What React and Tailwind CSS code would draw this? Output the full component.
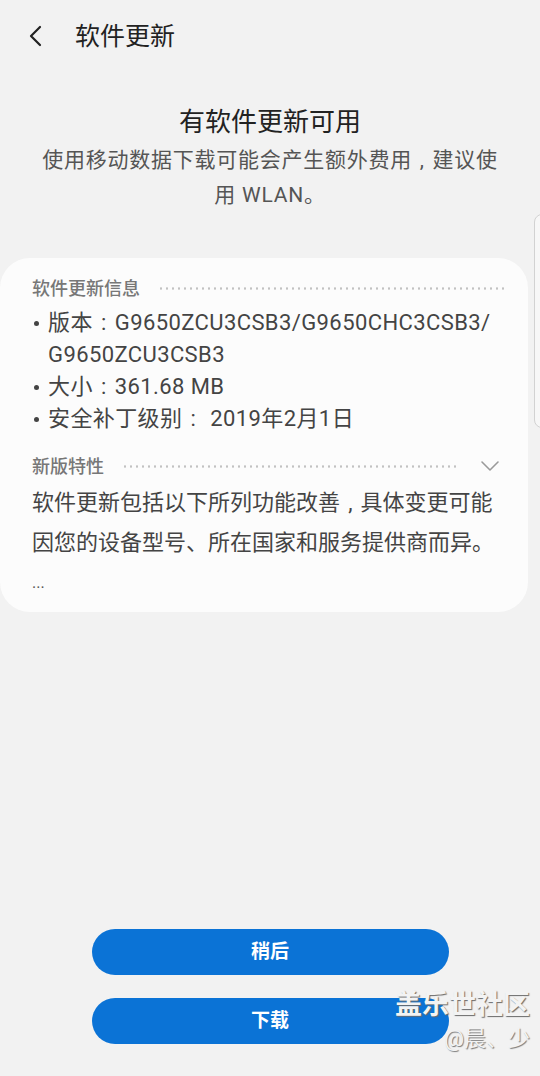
const FONT = "font-['Roboto','Noto_Sans_CJK_SC',sans-serif]";

// full-width punctuation drawn centred in its em box, as on the device
function Pu({ children }) {
  return <span className="px-[0.37em]">{children}</span>;
}

function Dots({ className = "" }) {
  return (
    <div
      className={`h-[3px] flex-1 bg-[radial-gradient(circle,#c2c2c2_1px,transparent_1.3px)] bg-[length:6px_3px] bg-repeat-x ${className}`}
    />
  );
}

const BULLETS = [
  [<>版本<Pu>:</Pu>G9650ZCU3CSB3/G9650CHC3CSB3/</>, "G9650ZCU3CSB3"],
  [<>大小<Pu>:</Pu>361.68 MB</>],
  [<>安全补丁级别<Pu>:</Pu> 2019年2月1日</>],
];

export default function App() {
  return (
    <div className={`relative h-[1076px] w-[540px] overflow-hidden bg-[#f2f2f2] flex flex-col ${FONT}`}>
      {/* Top bar */}
      <div className="h-[72px] flex items-center pl-[28px]">
        <svg width="16" height="22" viewBox="0 0 16 22" fill="none">
          <path d="M12 2 L3 11 L12 20" stroke="#222" strokeWidth="2.2" strokeLinecap="round" strokeLinejoin="round" />
        </svg>
        <span className="ml-[31px] text-[25px] leading-none text-[#222]">软件更新</span>
      </div>

      {/* Heading */}
      <h1 className="mt-[32px] text-center text-[26px] leading-[36px] text-[#222]">有软件更新可用</h1>
      <div className="mt-[3px] px-[32px] text-center text-[21px] leading-[35px] text-[#555] tracking-[0.75px]">
        <p>使用移动数据下载可能会产生额外费用<Pu>,</Pu>建议使</p>
        <p>用 WLAN。</p>
      </div>

      {/* Info card */}
      <div className="mt-[45px] mr-[12px] rounded-[30px] bg-[#fcfcfc] pt-[15px] pb-[9px] pl-[32px] pr-[22px]">
        <div className="h-[30px] flex items-center gap-[18px]">
          <span className="text-[18px] font-medium text-[#777]">软件更新信息</span>
          <Dots />
        </div>
        <ul className="mt-[4px] text-[22px] leading-[32px] tracking-[0.4px] text-[#444]">
          {BULLETS.map((lines, i) => (
            <li key={i} className="flex">
              <span className="w-[16px] h-[32px] shrink-0 flex items-center pl-[2px]">
                <span className="block w-[5px] h-[5px] rounded-full bg-[#444]" />
              </span>
              <div>
                {lines.map((l, j) => (
                  <div key={j}>{l}</div>
                ))}
              </div>
            </li>
          ))}
        </ul>

        <div className="mt-[16px] h-[30px] flex items-center gap-[18px] pr-[6px]">
          <span className="text-[18px] font-medium text-[#777]">新版特性</span>
          <Dots />
          <svg width="20" height="12" viewBox="0 0 20 12" fill="none" className="ml-[4px]">
            <path d="M2 2 L10 10 L18 2" stroke="#9a9a9a" strokeWidth="1.6" strokeLinecap="round" strokeLinejoin="round" />
          </svg>
        </div>
        <div className="mt-[2px] text-[22px] leading-[40px] text-[#444]">
          <p>软件更新包括以下所列功能改善<Pu>,</Pu>具体变更可能</p>
          <p>因您的设备型号、所在国家和服务提供商而异。</p>
        </div>
        <p className="text-[16px] leading-[40px] text-[#555]">...</p>
      </div>

      {/* Buttons */}
      <div className="mt-auto pb-[32px] flex flex-col items-center gap-[23px]">
        <button className="w-[357px] h-[46px] rounded-full bg-[#0b73d6] text-white text-[19px] font-bold">稍后</button>
        <button className="w-[357px] h-[46px] rounded-full bg-[#0b73d6] text-white text-[19px] font-bold">下载</button>
      </div>

      {/* Edge panel handle */}
      <div className="absolute left-[534px] top-[214px] h-[214px] w-[14px] rounded-l-[8px] border border-[#d2d2d2] bg-[#f7f7f7]" />

      {/* Watermark */}
      <div className="absolute right-[10px] top-[988px] text-right">
        <div className="text-[27px] font-bold leading-[34px] text-[#f3f3f3] [text-shadow:1px_1px_1px_#6a6a6a]">盖乐世社区</div>
        <div className="mt-[4px] text-[22px] leading-[26px] text-[#f3f3f3] [text-shadow:1px_1px_1px_#777]">@晨、少</div>
      </div>
    </div>
  );
}
